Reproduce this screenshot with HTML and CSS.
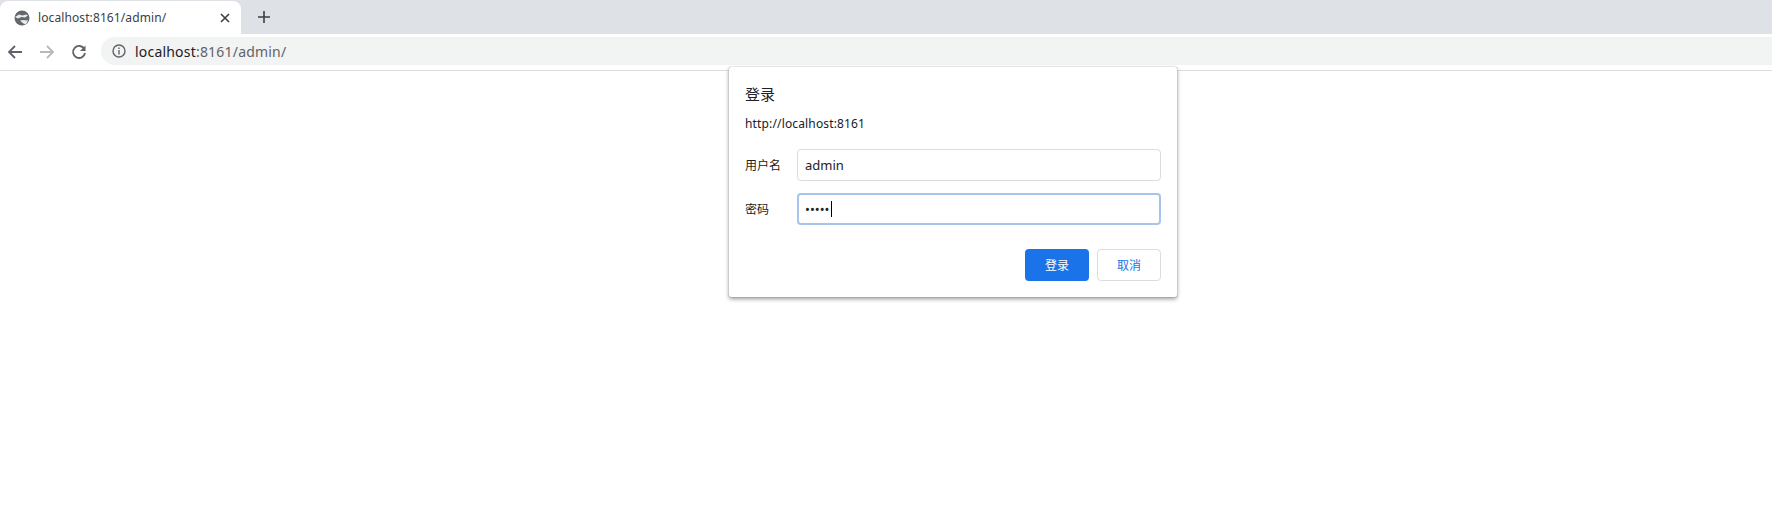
FILE: index.html
```html
<!DOCTYPE html>
<html lang="zh">

<head>
    <meta charset="UTF-8" />
    <title>localhost:8161/admin/</title>
    <link rel="stylesheet" href="styles.css">
</head>

<body>
    <div class="tab-strip">
        <div class="tab">
            <svg class="favicon" viewBox="0 0 16 16">
                <circle cx="8" cy="8" r="7.5" fill="#63666a" />
                <path d="M1 7l4-2.500 3.500 1 3.500-1 2 1-3 2-3.500-.5-3.500 1.500z" fill="#e8eaec" />
                <path d="M6 10.500l3.500-.5 3.500.5 1-1-1 3.500-2 1.500-3-2z" fill="#e8eaec" />
            </svg>
            <span class="tab-title">localhost:8161/admin/</span>
            <svg class="tab-close" viewBox="0 0 10 10">
                <path d="M1 1l8 8M9 1l-8 8" stroke="#3c4043" stroke-width="1.600" fill="none" />
            </svg>
        </div>
        <svg class="new-tab" viewBox="0 0 12 12">
            <path d="M6 0v12M0 6h12" stroke="#3c4043" stroke-width="1.600" fill="none" />
        </svg>
    </div>

    <div class="toolbar">
        <svg class="nav-icon" viewBox="0 0 16 16">
            <path d="M15 8H2M8 2L2 8l6 6" stroke="#5f6368" stroke-width="1.800" fill="none" />
        </svg>
        <svg class="nav-icon disabled" viewBox="0 0 16 16">
            <path d="M1 8h13M8 2l6 6-6 6" stroke="#b6b8bb" stroke-width="1.800" fill="none" />
        </svg>
        <svg class="nav-icon" viewBox="0 0 16 16">
            <path d="M13.300 5A6 6 0 1 0 14 9" stroke="#5f6368" stroke-width="1.800" fill="none" />
            <path d="M14.500 1.500v5.500H9z" fill="#5f6368" />
        </svg>
        <div class="address-bar">
            <svg class="info-icon" viewBox="0 0 14 14">
                <circle cx="7" cy="7" r="6" stroke="#5f6368" stroke-width="1.400" fill="none" />
                <path d="M7 6v4.500M7 3.500v1.400" stroke="#5f6368" stroke-width="1.400" fill="none" />
            </svg>
            <span class="host">localhost</span><span class="url-rest">:8161/admin/</span>
        </div>
    </div>

    <div class="login-dialog">
        <div class="dialog-title">登录</div>
        <div class="dialog-origin">http://localhost:8161</div>
        <div class="form-row">
            <label class="form-label">用户名</label>
            <div class="text-field">admin</div>
        </div>
        <div class="form-row">
            <label class="form-label">密码</label>
            <div class="text-field focused">•••••<span class="caret"></span></div>
        </div>
        <div class="dialog-buttons">
            <button class="btn btn-primary">登录</button>
            <button class="btn btn-cancel">取消</button>
        </div>
    </div>
</body>

</html>
```

FILE: styles.css
```css
* {
    box-sizing: border-box;
    margin: 0;
    padding: 0;
}

html,
body {
    height: 100%;
    background-color: white;
    font-family: 'Noto Sans', 'Noto Sans CJK SC', sans-serif;
    color: #202124;
    overflow: hidden;
}

.tab-strip {
    height: 34px;
    background-color: #dee1e6;
    display: flex;
    align-items: flex-end;
}

.tab {
    width: 241px;
    height: 33px;
    background-color: white;
    border-radius: 8px 8px 0 0;
    display: flex;
    align-items: center;
    padding: 0 14px;
}

.favicon {
    width: 16px;
    height: 16px;
    margin-right: 8px;
}

.tab-title {
    flex: 1;
    font-size: 12px;
    letter-spacing: 0.1px;
    color: #3c4043;
}

.tab-close {
    width: 10px;
    height: 10px;
    margin-right: -3px;
}

.new-tab {
    width: 12px;
    height: 12px;
    margin: 0 0 11px 17px;
}

.toolbar {
    height: 37px;
    background-color: white;
    border-bottom: 1px solid #dadce0;
    display: flex;
    align-items: center;
    padding-left: 7px;
}

.nav-icon {
    width: 16px;
    height: 16px;
    margin-right: 16px;
}

.address-bar {
    flex: 1;
    height: 28px;
    margin: 0 0 2px -2px;
    background-color: #f2f3f3;
    border-radius: 14px 0 0 14px;
    display: flex;
    align-items: center;
    padding-left: 11px;
    font-size: 14px;
    letter-spacing: 0.2px;
}

.info-icon {
    width: 14px;
    height: 14px;
    margin-right: 9px;
}

.host {
    color: #202124;
}

.url-rest {
    color: #5f6368;
}

.login-dialog {
    position: absolute;
    top: 67px;
    left: 729px;
    width: 448px;
    height: 230px;
    background-color: white;
    border-radius: 2px;
    box-shadow: 0 0 1px rgba(0, 0, 0, 0.5), 0 2px 4px rgba(0, 0, 0, 0.4);
    padding: 17px 16px 0;
}

.dialog-title {
    font-size: 15px;
    line-height: 20px;
    color: #202124;
}

.dialog-origin {
    font-size: 12px;
    line-height: 18px;
    letter-spacing: 0.15px;
    margin-top: 11px;
    margin-bottom: 16px;
    color: #202124;
}

.form-row {
    display: flex;
    align-items: center;
    margin-bottom: 12px;
}

.form-label {
    width: 52px;
    font-size: 12px;
    color: #202124;
}

.text-field {
    width: 364px;
    height: 32px;
    border: 1px solid #dadce0;
    border-radius: 4px;
    padding: 0 7px;
    display: flex;
    align-items: center;
    font-size: 13px;
}

.text-field.focused {
    border: 2px solid #a8c3ec;
    padding: 0 6px;
    color: #202124;
}

.caret {
    width: 1px;
    height: 16px;
    background-color: black;
    margin-left: 2px;
}

.dialog-buttons {
    display: flex;
    justify-content: flex-end;
    gap: 8px;
    margin-top: 24px;
}

.btn {
    width: 64px;
    height: 32px;
    border-radius: 4px;
    font-family: inherit;
    font-size: 12px;
}

.btn-primary {
    background-color: #1a73e8;
    border: none;
    color: white;
}

.btn-cancel {
    background-color: white;
    border: 1px solid #dadce0;
    color: #1a73e8;
}
```
